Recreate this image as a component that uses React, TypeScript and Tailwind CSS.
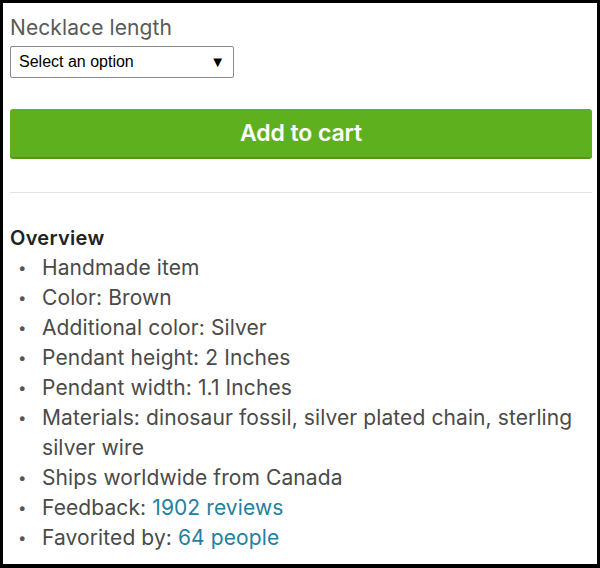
const items: { label: string; link?: string }[] = [
  { label: 'Handmade item' },
  { label: 'Color: Brown' },
  { label: 'Additional color: Silver' },
  { label: 'Pendant height: 2 Inches' },
  { label: 'Pendant width: 1.1 Inches' },
  { label: 'Materials: dinosaur fossil, silver plated chain, sterling silver wire' },
  { label: 'Ships worldwide from Canada' },
  { label: 'Feedback: ', link: '1902 reviews' },
  { label: 'Favorited by: ', link: '64 people' },
];

export default function App() {
  return (
    <div className="w-[600px] h-[568px] border-[3px] border-b-4 border-black bg-white overflow-hidden font-['Inter',sans-serif]">
      <div className="pl-[7px] pr-[5px] pt-[11px]">
        {/* Variation */}
        <label className="block text-[21px] leading-[28px] tracking-[0.1px] text-[#595959]">Necklace length</label>
        <div className="mt-[4px] w-[224px] h-[32px] border border-[#8a8a8a] rounded-[2px] flex items-center justify-between pl-[8px] pr-[8px] font-['Liberation_Sans',sans-serif] text-[16px] text-black">
          <span>Select an option</span>
          <span className="text-[15px]">▼</span>
        </div>

        <button className="mt-[31px] w-full h-[50px] rounded-[3px] bg-[#5fb01e] border-b-2 border-[#4f9a14] text-white text-[23px] font-semibold tracking-[-0.1px]">
          Add to cart
        </button>

        <div className="mt-[33px] h-px bg-[#e1e3df]" />

        {/* Overview */}
        <h2 className="mt-[30px] text-[20px] leading-[30px] tracking-[0.3px] font-semibold text-[#222]">Overview</h2>
        <ul className="text-[21px] leading-[30px] tracking-[0.1px] text-[#4a4a4a]">
          {items.map((it) => (
            <li key={it.label} className="flex">
              <span className="w-[32px] shrink-0 pl-[8px] text-[15px] text-[#555]">•</span>
              <span className="pr-[12px]">
                {it.label}
                {it.link && <a className="text-[#24809f]">{it.link}</a>}
              </span>
            </li>
          ))}
        </ul>
      </div>
    </div>
  );
}
